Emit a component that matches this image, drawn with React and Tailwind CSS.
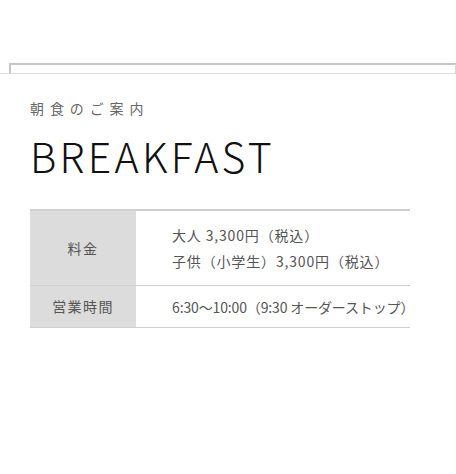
import React from 'react';

const jp = { fontFamily: '"Noto Sans CJK JP", "Noto Sans", sans-serif' };

function InfoRow({ label, children, height }) {
    return (
        <div className={`flex border-b border-[#d0d0d0] ${height}`}>
            <div className="w-[106px] shrink-0 bg-[#dcdcdc] flex items-center justify-center text-[14px] text-[#555] tracking-[0.1em]">
                {label}
            </div>
            <div className="flex-1 flex flex-col justify-center pl-[36px] text-[14px] text-[#555] leading-[26px] whitespace-nowrap">
                {children}
            </div>
        </div>
    );
}

export default function App() {
    return (
        <div className="w-[456px] h-[474px] bg-white overflow-hidden" style={jp}>
            {/* top strip */}
            <div className="flex mt-[63px]">
                <div className="w-[9px] h-[11px] border-b border-[#dddddd]"></div>
                <div className="flex-1 h-[11px] border-t-2 border-l-2 border-[#c6c6c6] border-r border-b border-r-[#d8d8d8] border-b-[#dddddd]"></div>
            </div>

            <div className="pl-[30px] pt-[24px]">
                <p className="text-[14px] text-[#666] tracking-[0.42em] leading-[20px]">朝食のご案内</p>
                <h1 className="mt-[11px] text-[41px] font-light text-[#111] leading-[52px] tracking-[0.08em]" style={{ fontFamily: '"Noto Sans CJK JP", Lato, sans-serif' }}>
                    BREAKFAST
                </h1>

                <div className="mt-[28px] w-[380px] border-t-2 border-[#cfcfcf]">
                    <InfoRow label="料金" height="h-[75px]">
                        <p className="tracking-[0.06em]">大人 3,300円（税込）</p>
                        <p className="tracking-[0.06em]">子供（小学生）3,300円（税込）</p>
                    </InfoRow>
                    <InfoRow label="営業時間" height="h-[42px]">
                        <p className="tracking-[-0.01em]">6:30〜10:00（9:30 オーダーストップ）</p>
                    </InfoRow>
                </div>
            </div>
        </div>
    );
}
